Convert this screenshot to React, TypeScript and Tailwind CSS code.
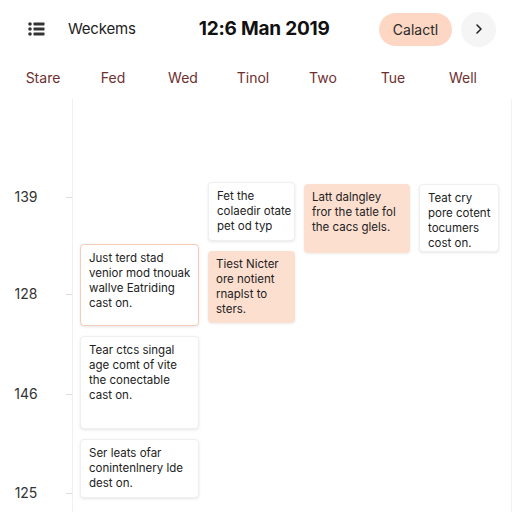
import React from "react";

type Ev = { x: number; y: number; w: number; h: number; peach?: boolean; border?: boolean; lines: string[] };

const events: Ev[] = [
  { x: 208, y: 181, w: 87, h: 59, lines: ["Fet the", "colaedir otate", "pet od typ"] },
  { x: 304, y: 183, w: 106, h: 69, peach: true, lines: ["Latt dalngley", "fror the tatle fol", "the cacs glels."] },
  { x: 419, y: 183, w: 80, h: 68, lines: ["Teat cry", "pore cotent", "tocumers", "cost on."] },
  { x: 208, y: 250, w: 87, h: 72, peach: true, lines: ["Tiest Nicter", "ore notient", "rnaplst to", "sters."] },
  { x: 80, y: 243, w: 119, h: 82, border: true, lines: ["Just terd stad", "venior mod tnouak", "wallve Eatriding", "cast on."] },
  { x: 80, y: 335, w: 119, h: 93, lines: ["Tear ctcs singal", "age comt of vite", "the conectable", "cast on."] },
  { x: 80, y: 438, w: 119, h: 59, lines: ["Ser leats ofar", "conintenlnery lde", "dest on."] },
];

const days = ["Stare", "Fed", "Wed", "Tinol", "Two", "Tue", "Well"];
const times = [
  { t: "139", y: 196 },
  { t: "128", y: 293 },
  { t: "146", y: 393 },
  { t: "125", y: 492 },
];

export default function App() {
  return (
    <div className="w-[512px] h-[512px] overflow-hidden bg-white flex flex-col" style={{ fontFamily: "Inter, 'Noto Sans', sans-serif" }}>
      <div className="h-[58px] flex items-center pl-[28px] pr-[16px] shrink-0">
        <svg width="17" height="14" viewBox="0 0 17 14" className="shrink-0">
          <circle cx="2" cy="2" r="1.8" fill="#333" />
          <circle cx="2" cy="7" r="1.8" fill="#333" />
          <circle cx="2" cy="12" r="1.8" fill="#333" />
          <rect x="5.5" y="0.6" width="11" height="2.8" rx="0.6" fill="#333" />
          <rect x="5.5" y="5.6" width="11" height="2.8" rx="0.6" fill="#333" />
          <rect x="5.5" y="10.6" width="11" height="2.8" rx="0.6" fill="#333" />
        </svg>
        <span className="ml-[23px] text-[15px] text-[#222] tracking-[-0.2px]">Weckems</span>
        <span className="ml-[63px] text-[19px] font-bold text-[#111] tracking-[-0.2px]">12:6 Man 2019</span>
        <div className="ml-auto flex items-center gap-[9px]">
          <div className="h-[33px] w-[73px] rounded-full bg-[#fdd7c3] flex items-center justify-center text-[14px] text-[#2a2a2a]">Calactl</div>
          <div className="h-[35px] w-[35px] rounded-full bg-[#f5f5f6] flex items-center justify-center">
            <svg width="10" height="12" viewBox="0 0 10 12">
              <path d="M3 2 L7 6 L3 10" fill="none" stroke="#222" strokeWidth="1.6" strokeLinecap="round" strokeLinejoin="round" />
            </svg>
          </div>
        </div>
      </div>
      <div className="h-[40px] grid grid-cols-7 items-center pl-[8px] pr-[14px] shrink-0 -mt-[1px] mb-[2px]">
        {days.map((d) => (
          <div key={d} className="text-center text-[14px] text-[#6e2f2f]">{d}</div>
        ))}
      </div>
      <div className="relative flex-1 flex">
        <div className="w-[73px] shrink-0 border-r border-[#f0f0f0] relative">
          {times.map((t) => (
            <div key={t.t} className="absolute left-0 flex items-center" style={{ top: t.y - 98 - 9 }}>
              <span className="w-[52px] text-center text-[14px] text-[#333] leading-[18px]">{t.t}</span>
              <span className="ml-[14px] w-[6px] h-px bg-[#dcdcdc]" />
            </div>
          ))}
        </div>
        <div className="flex-1 border-r border-[#f2f2f2]" />
        {events.map((e, i) => (
          <div
            key={i}
            className={
              "absolute rounded-[4px] px-[8px] pt-[6px] text-[11.5px] leading-[15px] text-[#222] " +
              (e.peach
                ? "bg-[#fddfd0] shadow-[0_1px_3px_rgba(0,0,0,0.08)]"
                : e.border
                ? "bg-white border border-[#f3cdb9] shadow-[0_1px_3px_rgba(0,0,0,0.1)]"
                : "bg-white border border-[#efefef] shadow-[0_1px_3px_rgba(0,0,0,0.1)]")
            }
            style={{ left: e.x, top: e.y - 98, width: e.w, height: e.h }}
          >
            {e.lines.map((l, j) => (
              <div key={j} className="whitespace-nowrap">{l}</div>
            ))}
          </div>
        ))}
      </div>
    </div>
  );
}
